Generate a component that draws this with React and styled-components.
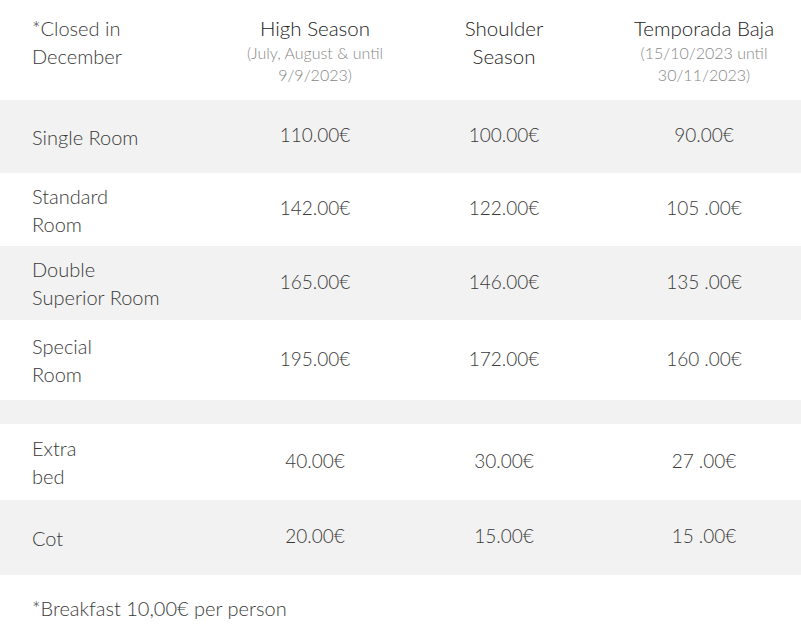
import React from "react";
import styled, { createGlobalStyle } from "styled-components";

const GlobalStyle = createGlobalStyle`
	html, body {
		margin: 0;
		padding: 0;
		background: #ffffff;
		overflow: hidden;
	}
	body {
		font-family: Lato, "Open Sans", sans-serif;
		color: #444444;
	}
`;

const Wrap = styled.div`
	width: 810px;
`;

const Row = styled.div`
	display: grid;
	grid-template-columns: 220px 190px 188px 212px;
	align-items: ${props => (props.top ? "start" : "center")};
	height: ${props => props.h}px;
	background: ${props => (props.gray ? "#f2f2f2" : "#ffffff")};
	padding-top: ${props => (props.top ? "14px" : "0")};
	box-sizing: border-box;
`;

const Label = styled.div`
	padding-left: 32px;
	font-size: 20px;
	line-height: 28px;
	font-weight: 300;
	color: #3a3a3a;
`;

const Head = styled.div`
	text-align: center;
	font-size: 20.5px;
	line-height: 28px;
	font-weight: 300;
	color: #222222;
`;

const Sub = styled.div`
	font-size: 16px;
	line-height: 22px;
	font-weight: 300;
	color: #888888;
`;

const Price = styled.div`
	text-align: center;
	font-size: 19px;
	line-height: 28px;
	font-weight: 300;
	color: #3a3a3a;
	margin-top: -3px;
`;

const Note = styled.p`
	margin: 0;
	padding: 19px 0 0 32px;
	font-size: 20px;
	line-height: 28px;
	font-weight: 300;
	color: #3a3a3a;
`;

const rooms = [
	{ name: ["Single Room"], prices: ["110.00€", "100.00€", "90.00€"], h: 73, gray: true },
	{ name: ["Standard", "Room"], prices: ["142.00€", "122.00€", "105 .00€"], h: 73 },
	{ name: ["Double", "Superior Room"], prices: ["165.00€", "146.00€", "135 .00€"], h: 74, gray: true },
	{ name: ["Special", "Room"], prices: ["195.00€", "172.00€", "160 .00€"], h: 80 }
];

const extras = [
	{ name: ["Extra", "bed"], prices: ["40.00€", "30.00€", "27 .00€"], h: 76 },
	{ name: ["Cot"], prices: ["20.00€", "15.00€", "15 .00€"], h: 75, gray: true }
];

const PriceRow = ({ item }) => (
	<Row h={item.h} gray={item.gray}>
		<Label>
			{item.name.map((line, i) => (
				<div key={i}>{line}</div>
			))}
		</Label>
		{item.prices.map((p, i) => (
			<Price key={i}>{p}</Price>
		))}
	</Row>
);

const App = () => (
	<Wrap>
		<GlobalStyle />
		<Row h={100} top>
			<Label>
				<div>*Closed in</div>
				<div>December</div>
			</Label>
			<Head>
				High Season
				<Sub>
					(July, August &amp; until
					<br />
					9/9/2023)
				</Sub>
			</Head>
			<Head>
				Shoulder
				<br />
				Season
			</Head>
			<Head>
				Temporada Baja
				<Sub>
					(15/10/2023 until
					<br />
					30/11/2023)
				</Sub>
			</Head>
		</Row>
		{rooms.map((r, i) => (
			<PriceRow key={i} item={r} />
		))}
		<Row h={24} gray />
		{extras.map((r, i) => (
			<PriceRow key={i} item={r} />
		))}
		<Note>*Breakfast 10,00€ per person</Note>
	</Wrap>
);

export default App;
